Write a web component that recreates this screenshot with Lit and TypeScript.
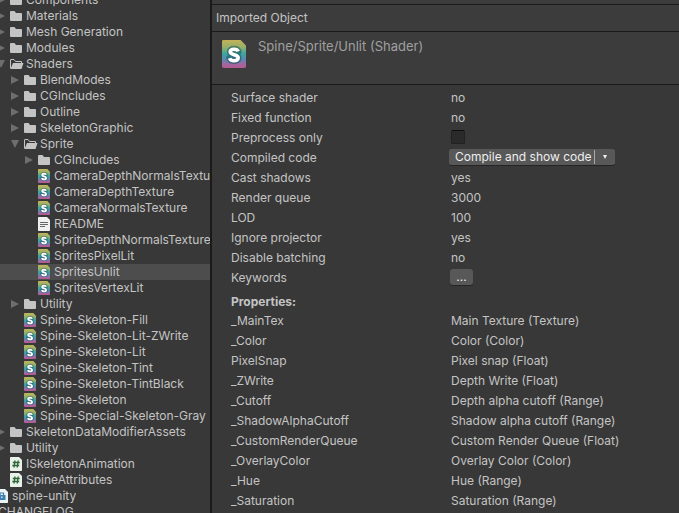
import { LitElement, html, css, svg, nothing } from "lit";
import { customElement, property } from "lit/decorators.js";
import { styleMap } from "lit/directives/style-map.js";

type IconKind = "folder" | "open" | "shader" | "text" | "script" | "package";

interface Entry {
  level: number;
  icon: IconKind;
  name: string;
  arrow?: "closed" | "expanded";
  selected?: boolean;
}

const folder = (level: number, name: string): Entry => ({ level, name, icon: "folder", arrow: "closed" });
const opened = (level: number, name: string): Entry => ({ level, name, icon: "open", arrow: "expanded" });
const file = (level: number, icon: IconKind, name: string, selected = false): Entry => ({ level, icon, name, selected });

const ENTRIES: Entry[] = [
  folder(2, "Components"),
  folder(2, "Materials"),
  folder(2, "Mesh Generation"),
  folder(2, "Modules"),
  opened(2, "Shaders"),
  folder(3, "BlendModes"),
  folder(3, "CGIncludes"),
  folder(3, "Outline"),
  folder(3, "SkeletonGraphic"),
  opened(3, "Sprite"),
  folder(4, "CGIncludes"),
  file(4, "shader", "CameraDepthNormalsTexture"),
  file(4, "shader", "CameraDepthTexture"),
  file(4, "shader", "CameraNormalsTexture"),
  file(4, "text", "README"),
  file(4, "shader", "SpriteDepthNormalsTexture"),
  file(4, "shader", "SpritesPixelLit"),
  file(4, "shader", "SpritesUnlit", true),
  file(4, "shader", "SpritesVertexLit"),
  folder(3, "Utility"),
  file(3, "shader", "Spine-Skeleton-Fill"),
  file(3, "shader", "Spine-Skeleton-Lit-ZWrite"),
  file(3, "shader", "Spine-Skeleton-Lit"),
  file(3, "shader", "Spine-Skeleton-Tint"),
  file(3, "shader", "Spine-Skeleton-TintBlack"),
  file(3, "shader", "Spine-Skeleton"),
  file(3, "shader", "Spine-Special-Skeleton-Gray"),
  folder(2, "SkeletonDataModifierAssets"),
  folder(2, "Utility"),
  file(2, "script", "ISkeletonAnimation"),
  file(2, "script", "SpineAttributes"),
  file(1, "package", "spine-unity"),
  file(0, "text", "CHANGELOG"),
];

const PROPERTIES: [string, string][] = [
  ["_MainTex", "Main Texture (Texture)"],
  ["_Color", "Color (Color)"],
  ["PixelSnap", "Pixel snap (Float)"],
  ["_ZWrite", "Depth Write (Float)"],
  ["_Cutoff", "Depth alpha cutoff (Range)"],
  ["_ShadowAlphaCutoff", "Shadow alpha cutoff (Range)"],
  ["_CustomRenderQueue", "Custom Render Queue (Float)"],
  ["_OverlayColor", "Overlay Color (Color)"],
  ["_Hue", "Hue (Range)"],
  ["_Saturation", "Saturation (Range)"],
];

@customElement("asset-icon")
export class AssetIcon extends LitElement {
  @property() kind: IconKind = "folder";

  static styles = css`
    :host { display: block; flex: none; width: 12px; height: 14px; }
    svg { display: block; width: 100%; height: 100%; overflow: visible; }
  `;

  private shape() {
    switch (this.kind) {
      case "folder":
        return svg`<path fill="#c4c4c4" d="M0 3Q0 2 1 2H4.500L6 4H11Q12 4 12 5V11Q12 12 11 12H1Q0 12 0 11Z"/>`;
      case "open":
        return svg`
          <path fill="none" stroke="#c4c4c4" d="M.5 11.500V3Q.5 2.500 1 2.500H4L5.500 4.500H11.500V6"/>
          <path fill="#c4c4c4" d="M3 6H13.500L11.500 12H0.500Z"/>`;
      case "shader":
        return svg`
          <defs><linearGradient id="g" x1="0" y1="0" x2="0" y2="1">
            <stop offset="0" stop-color="#c4b258"/><stop offset=".25" stop-color="#98b068"/>
            <stop offset=".5" stop-color="#3ba5a2"/><stop offset=".7" stop-color="#5b88b0"/>
            <stop offset=".88" stop-color="#a8649e"/><stop offset="1" stop-color="#b05a90"/>
          </linearGradient></defs>
          <path fill="url(#g)" d="M.7 0H9.300L12 2.700V13.300Q12 14 11.300 14H.7Q0 14 0 13.300V.7Q0 0 .7 0Z"/>
          <path fill="none" stroke="#17535f" stroke-opacity=".55" stroke-width="3.400" stroke-linecap="round" d="M8.100 5.700C7.800 4.900 7 4.600 6 4.600C4.800 4.600 4.100 5.100 4.100 5.900C4.100 7.800 8.100 6.900 8.100 8.900C8.100 9.800 7.200 10.400 6 10.400C4.900 10.400 4.100 10 3.800 9.100"/>
          <path fill="none" stroke="#fff" stroke-width="1.800" d="M8.100 5.700C7.800 4.900 7 4.600 6 4.600C4.800 4.600 4.100 5.100 4.100 5.900C4.100 7.800 8.100 6.900 8.100 8.900C8.100 9.800 7.200 10.400 6 10.400C4.900 10.400 4.100 10 3.800 9.100"/>`;
      case "text":
        return svg`
          <path fill="#f0f0f0" d="M.7 0H9L12 3V13.300Q12 14 11.300 14H.7Q0 14 0 13.300V.7Q0 0 .7 0Z"/>
          <path stroke="#666" d="M2 5.500H10M2 7.500H10M2 9.500H7"/>`;
      case "script":
        return svg`
          <path fill="#eaf0ea" d="M.7 0H9L12 3V13.300Q12 14 11.300 14H.7Q0 14 0 13.300V.7Q0 0 .7 0Z"/>
          <path stroke="#2c6a35" stroke-width="1.400" d="M5 3.500L4 10.500M8.200 3.500L7.200 10.500M2.800 5.500H9.700M2.300 8.500H9.200"/>`;
      case "package":
        return svg`
          <path fill="#eaf2f6" d="M.7 0H9L12 3V13.300Q12 14 11.300 14H.7Q0 14 0 13.300V.7Q0 0 .7 0Z"/>
          <path fill="#3a7fb0" d="M2 6H9.500V11H2Z"/>
          <path fill="none" stroke="#3a7fb0" stroke-width="1.200" d="M4 6V4H7.500V6"/>
          <path fill="#cfe2ee" d="M5 7.500H6.500V9H5Z"/>`;
    }
  }

  render() {
    return html`<svg viewBox="0 0 12 14" aria-hidden="true">${this.shape()}</svg>`;
  }
}

@customElement("project-tree")
export class ProjectTree extends LitElement {
  static styles = css`
    :host { display: block; overflow: hidden; }
    .tree { list-style: none; margin: -8px 0 0 -32px; padding: 0; }
    .row { display: flex; align-items: center; height: 16px; white-space: nowrap; }
    .selected { background: #4d4d4d; }
    .slot { flex: none; width: 14px; height: 8px; }
    .slot svg { display: block; width: 8px; height: 8px; margin-left: 1px; fill: #6e6e6e; }
    .name { margin-left: 4px; }
  `;

  render() {
    return html`<ul class="tree" role="tree" aria-label="Project">
      ${ENTRIES.map(
        (e) => html`<li
          class="row ${e.selected ? "selected" : ""}"
          role="treeitem"
          aria-selected=${e.selected ? "true" : "false"}
          style=${styleMap({ paddingLeft: `${e.level * 14}px` })}
        >
          <span class="slot">
            ${e.arrow
              ? html`<svg viewBox="0 0 8 8" aria-hidden="true">
                  <path d=${e.arrow === "closed" ? "M0 0L8 4L0 8Z" : "M0 0H8L4 8Z"} />
                </svg>`
              : nothing}
          </span>
          <asset-icon kind=${e.icon}></asset-icon>
          <span class="name">${e.name}</span>
        </li>`
      )}
    </ul>`;
  }
}

@customElement("shader-inspector")
export class ShaderInspector extends LitElement {
  static styles = css`
    :host { display: block; overflow: hidden; }
    h1, h2, h3, dl, dd, dt { margin: 0; font-weight: 400; font-size: inherit; }
    .strip { height: 4px; background: #3c3c3c; border-bottom: 1px solid #1a1a1a; }
    .caption { line-height: 26px; padding-left: 4px; background: #3c3c3c; border-bottom: 1px solid #1a1a1a; }
    .head { display: flex; gap: 12px; height: 44px; padding: 8px 0 0 10px; background: #3c3c3c; border-bottom: 1px solid #1a1a1a; }
    .big { width: 24px; height: 28px; }
    .title { font-size: 13px; line-height: 12px; color: #a0a0a0; }
    .body { padding: 3px 0 0 19px; }
    .line { display: grid; grid-template-columns: 220px minmax(0, 1fr); align-items: center; height: 20px; white-space: nowrap; }
    .sub { padding-top: 4px; line-height: 19px; font-weight: 700; }
    button { margin: 0; border: 0; padding: 0; font: inherit; color: #eee; background: #585858; }
    .split { display: flex; align-items: center; width: 166px; height: 16px; margin: -2px 0 0 -2px; border-radius: 3px; background: #585858; box-shadow: 0 1px 0 #242424; }
    .main { flex: 1; text-align: left; height: 16px; padding-left: 6px; border-radius: 3px; line-height: 16px; }
    .more { display: grid; place-items: center; width: 21px; height: 14px; border-left: 1px solid #a8a8a8; }
    .more svg { width: 4px; height: 4px; fill: #eee; }
    .dots { display: block; width: 23px; height: 16px; margin: -2px 0 0 -1px; border-radius: 3px; box-shadow: 0 1px 0 #242424; line-height: 16px; }
    .check { display: block; appearance: none; box-sizing: border-box; width: 14px; height: 14px; margin: -2px 0 0; border: 1px solid #212121; border-top-color: #0d0d0d; border-radius: 2px; background: #2a2a2a; }
  `;

  private line(label: string, value: unknown) {
    return html`<div class="line"><dt>${label}</dt><dd>${value}</dd></div>`;
  }

  render() {
    return html`
      <div class="strip"></div>
      <h1 class="caption">Imported Object</h1>
      <header class="head">
        <asset-icon class="big" kind="shader"></asset-icon>
        <h2 class="title">Spine/Sprite/Unlit (Shader)</h2>
      </header>
      <div class="body">
        <dl>
          ${this.line("Surface shader", "no")}
          ${this.line("Fixed function", "no")}
          <div class="line">
            <dt><label for="preprocess">Preprocess only</label></dt>
            <dd><input class="check" id="preprocess" type="checkbox" /></dd>
          </div>
          ${this.line(
            "Compiled code",
            html`<div class="split">
              <button class="main" type="button">Compile and show code</button>
              <button class="more" type="button" aria-haspopup="menu" aria-label="Compile options">
                <svg viewBox="0 0 4 4" aria-hidden="true"><path d="M0 0H4L2 4Z" /></svg>
              </button>
            </div>`
          )}
          ${this.line("Cast shadows", "yes")}
          ${this.line("Render queue", "3000")}
          ${this.line("LOD", "100")}
          ${this.line("Ignore projector", "yes")}
          ${this.line("Disable batching", "no")}
          ${this.line("Keywords", html`<button class="dots" type="button" aria-label="Show keywords">...</button>`)}
        </dl>
        <h3 class="sub">Properties:</h3>
        <dl>${PROPERTIES.map(([name, value]) => this.line(name, value))}</dl>
      </div>
    `;
  }
}

@customElement("app-root")
export class AppRoot extends LitElement {
  static styles = css`
    :host {
      display: grid;
      grid-template-columns: 210px minmax(0, 1fr);
      height: 100vh;
      overflow: hidden;
      background: #383838;
      color: #c4c4c4;
      font: 12px/16px Inter, "Liberation Sans", sans-serif;
    }
    .inspector { border-left: 2px solid #1a1a1a; }
  `;

  render() {
    return html`
      <project-tree></project-tree>
      <shader-inspector class="inspector"></shader-inspector>
    `;
  }
}
